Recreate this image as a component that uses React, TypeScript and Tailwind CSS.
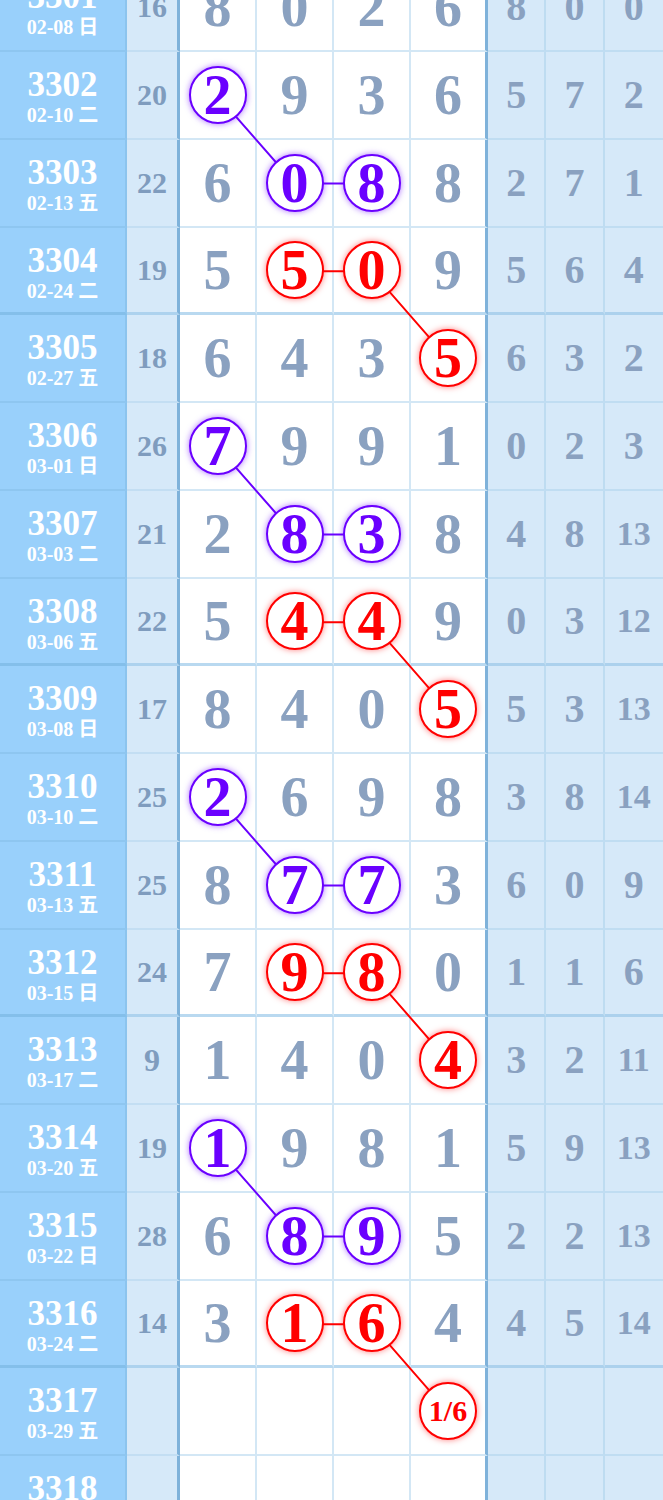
import React from 'react';

type Mark = 'p' | 'r';

type Row = {
  no: string;
  date?: string;
  sum?: string;
  d: string[];
  r: string[];
  marks?: Record<number, Mark>;
};

const rows: Row[] = [
  { no: '3301', date: '02-08 日', sum: '16', d: ['8', '0', '2', '6'], r: ['8', '0', '0'] },
  { no: '3302', date: '02-10 二', sum: '20', d: ['2', '9', '3', '6'], r: ['5', '7', '2'], marks: { 0: 'p' } },
  { no: '3303', date: '02-13 五', sum: '22', d: ['6', '0', '8', '8'], r: ['2', '7', '1'], marks: { 1: 'p', 2: 'p' } },
  { no: '3304', date: '02-24 二', sum: '19', d: ['5', '5', '0', '9'], r: ['5', '6', '4'], marks: { 1: 'r', 2: 'r' } },
  { no: '3305', date: '02-27 五', sum: '18', d: ['6', '4', '3', '5'], r: ['6', '3', '2'], marks: { 3: 'r' } },
  { no: '3306', date: '03-01 日', sum: '26', d: ['7', '9', '9', '1'], r: ['0', '2', '3'], marks: { 0: 'p' } },
  { no: '3307', date: '03-03 二', sum: '21', d: ['2', '8', '3', '8'], r: ['4', '8', '13'], marks: { 1: 'p', 2: 'p' } },
  { no: '3308', date: '03-06 五', sum: '22', d: ['5', '4', '4', '9'], r: ['0', '3', '12'], marks: { 1: 'r', 2: 'r' } },
  { no: '3309', date: '03-08 日', sum: '17', d: ['8', '4', '0', '5'], r: ['5', '3', '13'], marks: { 3: 'r' } },
  { no: '3310', date: '03-10 二', sum: '25', d: ['2', '6', '9', '8'], r: ['3', '8', '14'], marks: { 0: 'p' } },
  { no: '3311', date: '03-13 五', sum: '25', d: ['8', '7', '7', '3'], r: ['6', '0', '9'], marks: { 1: 'p', 2: 'p' } },
  { no: '3312', date: '03-15 日', sum: '24', d: ['7', '9', '8', '0'], r: ['1', '1', '6'], marks: { 1: 'r', 2: 'r' } },
  { no: '3313', date: '03-17 二', sum: '9', d: ['1', '4', '0', '4'], r: ['3', '2', '11'], marks: { 3: 'r' } },
  { no: '3314', date: '03-20 五', sum: '19', d: ['1', '9', '8', '1'], r: ['5', '9', '13'], marks: { 0: 'p' } },
  { no: '3315', date: '03-22 日', sum: '28', d: ['6', '8', '9', '5'], r: ['2', '2', '13'], marks: { 1: 'p', 2: 'p' } },
  { no: '3316', date: '03-24 二', sum: '14', d: ['3', '1', '6', '4'], r: ['4', '5', '14'], marks: { 1: 'r', 2: 'r' } },
  { no: '3317', date: '03-29 五', d: ['', '', '', '1/6'], r: ['', '', ''], marks: { 3: 'r' } },
  { no: '3318', d: ['', '', '', ''], r: ['', '', ''] },
];

const ROW_H = 87.75;
// content centre of each white column (last one has a 3px border)
const colX = (c: number) => (c < 3 ? 180 + 77 * c + 37.5 : 411 + 37);
const rowY = (i: number) => i * ROW_H + ROW_H / 2;

// trend lines: purple then red for every 4-row block
const paths: { color: string; pts: [number, number][] }[] = [1, 5, 9, 13].flatMap((b) => [
  { color: '#6a00ff', pts: [[b, 0], [b + 1, 1], [b + 1, 2]] as [number, number][] },
  { color: '#ff0000', pts: [[b + 2, 1], [b + 2, 2], [b + 3, 3]] as [number, number][] },
]);

const serif = "font-['Liberation_Serif','Noto_Sans_CJK_SC',serif]";

function Ball({ v, kind }: { v: string; kind: Mark }) {
  const purple = kind === 'p';
  return (
    <div
      className={`relative z-10 flex h-[58px] w-[58px] items-center justify-center rounded-full border-2 bg-white font-bold leading-none ${
        purple
          ? 'border-[#6a00ff] text-[#6a00ff] shadow-[0_0_6px_rgba(106,0,255,0.55)]'
          : 'border-[#ff0000] text-[#ff0000] shadow-[0_0_6px_rgba(255,0,0,0.5)]'
      } ${v.length > 1 ? 'text-[30px]' : 'text-[56px]'}`}
    >
      {v}
    </div>
  );
}

export default function App() {
  return (
    <div className={`h-[1500px] w-[663px] overflow-hidden bg-white ${serif}`}>
      <div className="relative mt-[-35.75px] grid grid-cols-[127px_53px_repeat(4,77px)_repeat(3,1fr)] auto-rows-[87.75px] font-bold">
        {rows.map((row, i) => {
          const groupEnd = i % 4 === 3;
          const bb = groupEnd ? 'border-b-[3px]' : 'border-b-2';
          return (
            <React.Fragment key={row.no}>
              <div
                className={`flex flex-col items-center justify-start border-r-2 border-r-[#8cc4ee] bg-[#99d0fb] pt-[15px] text-white ${bb} ${
                  groupEnd ? 'border-b-[#84bfea]' : 'border-b-[#8ec6f0]'
                }`}
              >
                <span className="text-[35px] leading-[35px]">{row.no}</span>
                {row.date && <span className="mt-[3px] text-[20px] leading-[20px]">{row.date}</span>}
              </div>
              <div
                className={`flex items-center justify-center border-r-[3px] border-r-[#7fb2da] bg-[#d6e9f9] leading-none text-[#7f9cbe] ${
                  row.sum && row.sum.length === 1 ? 'text-[32px]' : 'text-[30px]'
                } ${bb} ${groupEnd ? 'border-b-[#add2ee]' : 'border-b-[#c3def3]'}`}
              >
                {row.sum}
              </div>
              {row.d.map((v, c) => {
                const mark = row.marks?.[c];
                return (
                  <div
                    key={c}
                    className={`flex items-center justify-center bg-white leading-none text-[#8aa1c0] ${
                      c < 3 ? 'border-r-2 border-r-[#d3e7f5]' : 'border-r-[3px] border-r-[#7fb2da]'
                    } ${bb} ${groupEnd ? 'border-b-[#b9d9f0]' : 'border-b-[#d3e7f5]'}`}
                  >
                    {mark ? <Ball v={v} kind={mark} /> : <span className="text-[56px]">{v}</span>}
                  </div>
                );
              })}
              {row.r.map((v, c) => (
                <div
                  key={`r${c}`}
                  className={`flex items-center justify-center bg-[#d6e9f9] leading-none text-[#8aa1c0] ${
                    c < 2 ? 'border-r-2 border-r-[#bedcf1]' : ''
                  } ${v.length > 1 ? 'text-[34px]' : 'text-[40px]'} ${bb} ${
                    groupEnd ? 'border-b-[#acd1ed]' : 'border-b-[#c0ddf2]'
                  }`}
                >
                  {v}
                </div>
              ))}
            </React.Fragment>
          );
        })}
        <svg className="pointer-events-none absolute left-0 top-0" width={663} height={rows.length * ROW_H}>
          {paths.map((p, k) => (
            <polyline
              key={k}
              points={p.pts.map(([r, c]) => `${colX(c)},${rowY(r)}`).join(' ')}
              fill="none"
              stroke={p.color}
              strokeWidth={2}
            />
          ))}
        </svg>
      </div>
    </div>
  );
}
